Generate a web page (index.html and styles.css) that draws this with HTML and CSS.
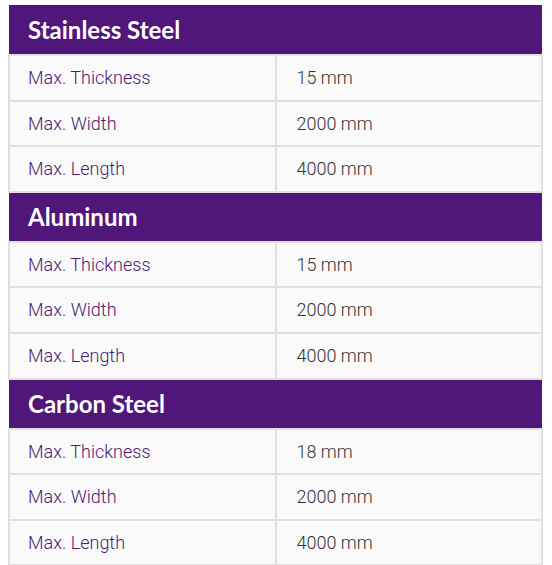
FILE: index.html
```html
<!DOCTYPE html>
<html>
<head>
<meta charset="utf-8">
<link rel="stylesheet" href="styles.css">
</head>
<body>
<div class="wrap">
<table class="specs">
  <tbody>
    <tr class="group"><th colspan="2">Stainless Steel</th></tr>
    <tr><td class="label">Max. Thickness</td><td class="value">15 mm</td></tr>
    <tr><td class="label">Max. Width</td><td class="value">2000 mm</td></tr>
    <tr><td class="label">Max. Length</td><td class="value">4000 mm</td></tr>
    <tr class="group"><th colspan="2">Aluminum</th></tr>
    <tr><td class="label">Max. Thickness</td><td class="value">15 mm</td></tr>
    <tr><td class="label">Max. Width</td><td class="value">2000 mm</td></tr>
    <tr><td class="label">Max. Length</td><td class="value">4000 mm</td></tr>
    <tr class="group"><th colspan="2">Carbon Steel</th></tr>
    <tr><td class="label">Max. Thickness</td><td class="value">18 mm</td></tr>
    <tr><td class="label">Max. Width</td><td class="value">2000 mm</td></tr>
    <tr><td class="label">Max. Length</td><td class="value">4000 mm</td></tr>
  </tbody>
</table>
</div>
</body>
</html>
```
FILE: styles.css
```css
html, body {
  margin: 0;
  padding: 0;
  background: #ffffff;
}
.wrap {
  padding: 5px 9px 0 8px;
}
.specs {
  width: 535px;
  border-collapse: collapse;
  font-family: Roboto, "Noto Sans", sans-serif;
}
.specs th {
  background: #511679;
  color: #ffffff;
  text-align: left;
  font-family: Lato, Roboto, sans-serif;
  font-size: 24px;
  font-weight: 700;
  height: 50px;
  padding: 0 19px 1px;
  box-sizing: border-box;
  border: none;
}
.specs td {
  width: 50%;
  background: #fafafa;
  border: 2px solid #e0e0e0;
  padding: 11px 20px;
  line-height: 21.6px;
  font-size: 18px;
  font-weight: 300;
}
.specs .label {
  color: #4a1a72;
  padding-left: 18px;
}
.specs .value {
  color: #333333;
}
```
